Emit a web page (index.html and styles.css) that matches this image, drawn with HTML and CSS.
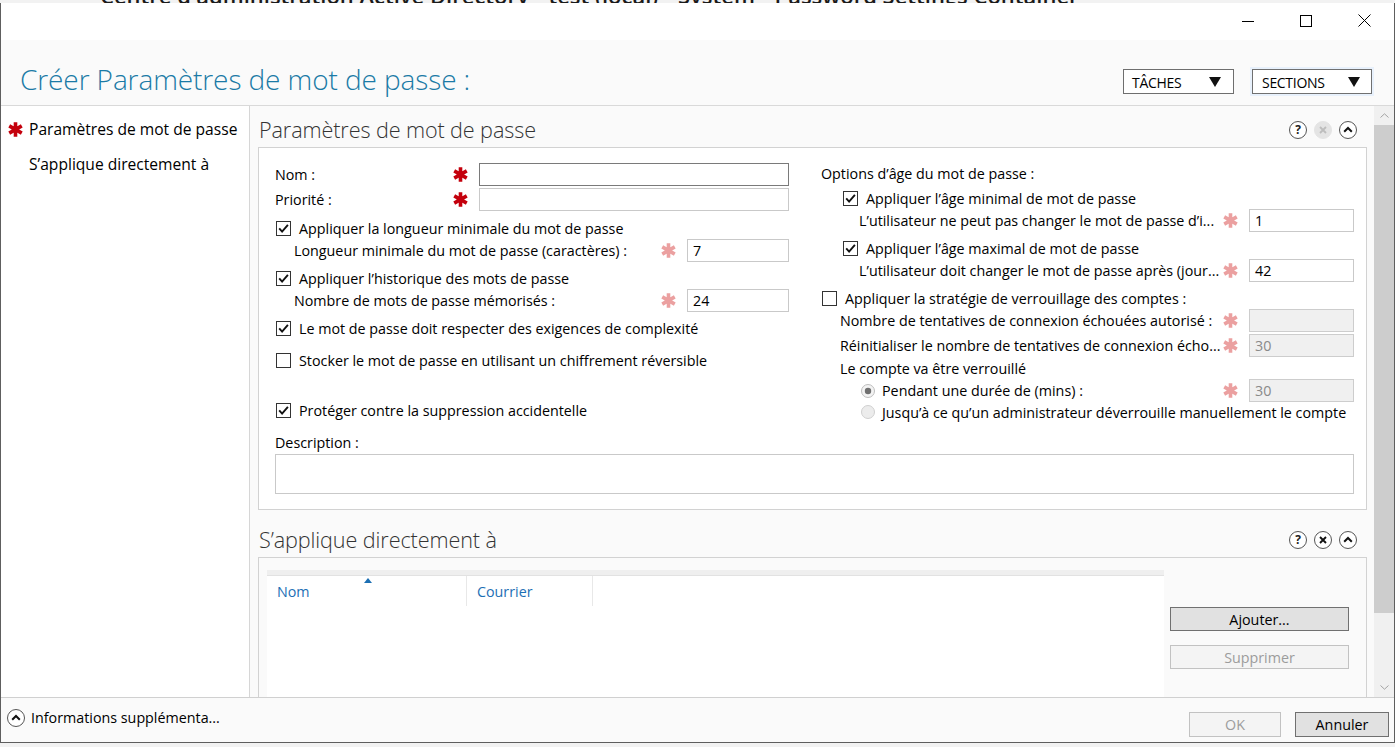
FILE: index.html
```html
<!DOCTYPE html>
<html lang="fr">
<head>
<meta charset="utf-8">
<title>Créer Paramètres de mot de passe</title>
<link rel="stylesheet" href="styles.css">
</head>
<body>
<div class="desk-top"><span>Centre d'administration Active Directory • test (local) • System • Password Settings Container</span></div>
<div class="window">
  <div class="titlebar">
    <div class="cap-btn"><svg width="12" height="12" viewBox="0 0 12 12"><path d="M0 6.5H12" stroke="#000" stroke-width="1"/></svg></div>
    <div class="cap-btn"><svg width="12" height="12" viewBox="0 0 12 12"><rect x="0.5" y="0.5" width="11" height="11" fill="none" stroke="#000"/></svg></div>
    <div class="cap-btn cap-close"><svg width="13" height="13" viewBox="0 0 13 13"><path d="M0.5 0.5L12.5 12.5M12.5 0.5L0.5 12.5" stroke="#000" stroke-width="1"/></svg></div>
  </div>
  <div class="header">
    <h1 class="title">Créer Paramètres de mot de passe :</h1>
    <div class="hdr-btns">
      <div class="drop"><span>TÂCHES</span><svg width="12" height="10" viewBox="0 0 12 10"><path d="M0 0H12L6 10Z" fill="#111"/></svg></div>
      <div class="drop drop-sections"><span>SECTIONS</span><svg width="12" height="10" viewBox="0 0 12 10"><path d="M0 0H12L6 10Z" fill="#111"/></svg></div>
    </div>
  </div>
  <div class="body">
    <nav class="nav">
      <div class="nav-item"><svg class="ast ast-red nav-ast" viewBox="0 0 16 16"><path d="M8 1.2V14.8M2.1 4.6L13.9 11.4M2.1 11.4L13.9 4.6" stroke="currentColor" stroke-width="3.4"/></svg><span>Paramètres de mot de passe</span></div>
      <div class="nav-item"><span>S’applique directement à</span></div>
    </nav>
    <div class="main">
      <div class="content">
        <div class="sec-head">
          <h2>Paramètres de mot de passe</h2>
          <div class="icons">
            <span class="ico ico-help">?</span>
            <span class="ico ico-off"><svg width="8" height="8" viewBox="0 0 8 8"><path d="M1 1L7 7M7 1L1 7" stroke="#bdbdbd" stroke-width="1.8"/></svg></span>
            <span class="ico"><svg width="10" height="7" viewBox="0 0 10 7"><path d="M1.2 5.8L5 2L8.8 5.8" fill="none" stroke="#111" stroke-width="2"/></svg></span>
          </div>
        </div>
        <div class="box box1">
          <div class="cols">
            <div class="col-left">
              <div class="row r-nom">
                <span class="lbl">Nom :</span>
                <svg class="ast ast-red" viewBox="0 0 16 16"><path d="M8 1.2V14.8M2.1 4.6L13.9 11.4M2.1 11.4L13.9 4.6" stroke="currentColor" stroke-width="3.4"/></svg>
                <span class="inp inp-wide inp-focus"></span>
              </div>
              <div class="row r-prio">
                <span class="lbl">Priorité :</span>
                <svg class="ast ast-red" viewBox="0 0 16 16"><path d="M8 1.2V14.8M2.1 4.6L13.9 11.4M2.1 11.4L13.9 4.6" stroke="currentColor" stroke-width="3.4"/></svg>
                <span class="inp inp-wide"></span>
              </div>
              <div class="row cbrow m6">
                <svg class="cb" viewBox="0 0 15 15"><rect x="0.5" y="0.5" width="14" height="14" fill="#fff" stroke="#333"/><path d="M3.2 7.4L6.1 10.6L11.9 3.8" fill="none" stroke="#111" stroke-width="1.9"/></svg>
                <span>Appliquer la longueur minimale du mot de passe</span>
              </div>
              <div class="row sub ind19">
                <span class="lbl">Longueur minimale du mot de passe (caractères) :</span>
                <svg class="ast ast-pink" viewBox="0 0 16 16"><path d="M8 1.2V14.8M2.1 4.6L13.9 11.4M2.1 11.4L13.9 4.6" stroke="currentColor" stroke-width="3.4"/></svg>
                <span class="inp inp-sm">7</span>
              </div>
              <div class="row cbrow m5">
                <svg class="cb" viewBox="0 0 15 15"><rect x="0.5" y="0.5" width="14" height="14" fill="#fff" stroke="#333"/><path d="M3.2 7.4L6.1 10.6L11.9 3.8" fill="none" stroke="#111" stroke-width="1.9"/></svg>
                <span>Appliquer l’historique des mots de passe</span>
              </div>
              <div class="row sub ind19">
                <span class="lbl">Nombre de mots de passe mémorisés :</span>
                <svg class="ast ast-pink" viewBox="0 0 16 16"><path d="M8 1.2V14.8M2.1 4.6L13.9 11.4M2.1 11.4L13.9 4.6" stroke="currentColor" stroke-width="3.4"/></svg>
                <span class="inp inp-sm">24</span>
              </div>
              <div class="row cbrow m5">
                <svg class="cb" viewBox="0 0 15 15"><rect x="0.5" y="0.5" width="14" height="14" fill="#fff" stroke="#333"/><path d="M3.2 7.4L6.1 10.6L11.9 3.8" fill="none" stroke="#111" stroke-width="1.9"/></svg>
                <span>Le mot de passe doit respecter des exigences de complexité</span>
              </div>
              <div class="row cbrow m10">
                <svg class="cb" viewBox="0 0 15 15"><rect x="0.5" y="0.5" width="14" height="14" fill="#fff" stroke="#333"/></svg>
                <span>Stocker le mot de passe en utilisant un chiffrement réversible</span>
              </div>
              <div class="row cbrow m28">
                <svg class="cb" viewBox="0 0 15 15"><rect x="0.5" y="0.5" width="14" height="14" fill="#fff" stroke="#333"/><path d="M3.2 7.4L6.1 10.6L11.9 3.8" fill="none" stroke="#111" stroke-width="1.9"/></svg>
                <span>Protéger contre la suppression accidentelle</span>
              </div>
            </div>
            <div class="col-right">
              <div class="row r-label">Options d’âge du mot de passe :</div>
              <div class="row cbrow m4 ind22">
                <svg class="cb" viewBox="0 0 15 15"><rect x="0.5" y="0.5" width="14" height="14" fill="#fff" stroke="#333"/><path d="M3.2 7.4L6.1 10.6L11.9 3.8" fill="none" stroke="#111" stroke-width="1.9"/></svg>
                <span>Appliquer l’âge minimal de mot de passe</span>
              </div>
              <div class="row sub ind38">
                <span class="lbl">L’utilisateur ne peut pas changer le mot de passe d’i...</span>
                <svg class="ast ast-pink" viewBox="0 0 16 16"><path d="M8 1.2V14.8M2.1 4.6L13.9 11.4M2.1 11.4L13.9 4.6" stroke="currentColor" stroke-width="3.4"/></svg>
                <span class="inp inp-r">1</span>
              </div>
              <div class="row cbrow m5 ind22">
                <svg class="cb" viewBox="0 0 15 15"><rect x="0.5" y="0.5" width="14" height="14" fill="#fff" stroke="#333"/><path d="M3.2 7.4L6.1 10.6L11.9 3.8" fill="none" stroke="#111" stroke-width="1.9"/></svg>
                <span>Appliquer l’âge maximal de mot de passe</span>
              </div>
              <div class="row sub ind38">
                <span class="lbl">L’utilisateur doit changer le mot de passe après (jour...</span>
                <svg class="ast ast-pink" viewBox="0 0 16 16"><path d="M8 1.2V14.8M2.1 4.6L13.9 11.4M2.1 11.4L13.9 4.6" stroke="currentColor" stroke-width="3.4"/></svg>
                <span class="inp inp-r">42</span>
              </div>
              <div class="row cbrow m5">
                <svg class="cb" viewBox="0 0 15 15"><rect x="0.5" y="0.5" width="14" height="14" fill="#fff" stroke="#333"/></svg>
                <span>Appliquer la stratégie de verrouillage des comptes :</span>
              </div>
              <div class="row sub ind19">
                <span class="lbl">Nombre de tentatives de connexion échouées autorisé :</span>
                <svg class="ast ast-pink" viewBox="0 0 16 16"><path d="M8 1.2V14.8M2.1 4.6L13.9 11.4M2.1 11.4L13.9 4.6" stroke="currentColor" stroke-width="3.4"/></svg>
                <span class="inp inp-r inp-dis"></span>
              </div>
              <div class="row sub ind19 m2">
                <span class="lbl">Réinitialiser le nombre de tentatives de connexion écho...</span>
                <svg class="ast ast-pink" viewBox="0 0 16 16"><path d="M8 1.2V14.8M2.1 4.6L13.9 11.4M2.1 11.4L13.9 4.6" stroke="currentColor" stroke-width="3.4"/></svg>
                <span class="inp inp-r inp-dis">30</span>
              </div>
              <div class="row r-label ind19 m1">Le compte va être verrouillé</div>
              <div class="row sub ind40 m1">
                <svg class="rd" viewBox="0 0 14 14"><circle cx="7" cy="7" r="6.5" fill="#f3f3f3" stroke="#bdbdbd"/><circle cx="7" cy="7" r="3.2" fill="#6f6f6f"/></svg>
                <span class="lbl">Pendant une durée de (mins) :</span>
                <svg class="ast ast-pink" viewBox="0 0 16 16"><path d="M8 1.2V14.8M2.1 4.6L13.9 11.4M2.1 11.4L13.9 4.6" stroke="currentColor" stroke-width="3.4"/></svg>
                <span class="inp inp-r inp-dis">30</span>
              </div>
              <div class="row r-radio ind40">
                <svg class="rd" viewBox="0 0 14 14"><circle cx="7" cy="7" r="6.5" fill="#ececec" stroke="#cfcfcf"/></svg>
                <span>Jusqu’à ce qu’un administrateur déverrouille manuellement le compte</span>
              </div>
            </div>
          </div>
          <div class="desc-lbl">Description :</div>
          <div class="desc"></div>
        </div>

        <div class="sec-head sec-head2">
          <h2>S’applique directement à</h2>
          <div class="icons">
            <span class="ico ico-help">?</span>
            <span class="ico"><svg width="8" height="8" viewBox="0 0 8 8"><path d="M1 1L7 7M7 1L1 7" stroke="#111" stroke-width="1.9"/></svg></span>
            <span class="ico"><svg width="10" height="7" viewBox="0 0 10 7"><path d="M1.2 5.8L5 2L8.8 5.8" fill="none" stroke="#111" stroke-width="2"/></svg></span>
          </div>
        </div>
        <div class="box box2">
          <div class="list">
            <div class="list-top"></div>
            <div class="list-head">
              <div class="lcol lc1">Nom<svg class="sort" width="8" height="5" viewBox="0 0 8 5"><path d="M0 5L4 0L8 5Z" fill="#1c6fb3"/></svg></div>
              <div class="lcol lc2">Courrier</div>
              <div class="lcol lc3"></div>
            </div>
          </div>
          <div class="list-btns">
            <div class="btn">Ajouter...</div>
            <div class="btn btn-dis">Supprimer</div>
          </div>
        </div>
      </div>
      <div class="scrollbar">
        <div class="sb-arrow"><svg width="9" height="5" viewBox="0 0 9 5"><path d="M0.5 4.5L4.5 0.8L8.5 4.5" fill="none" stroke="#a3a3a3"/></svg></div>
        <div class="sb-thumb"></div>
        <div class="sb-track"></div>
        <div class="sb-arrow"><svg width="9" height="5" viewBox="0 0 9 5"><path d="M0.5 0.5L4.5 4.2L8.5 0.5" fill="none" stroke="#a3a3a3"/></svg></div>
      </div>
    </div>
  </div>
  <div class="footer">
    <div class="more">
      <span class="ico"><svg width="10" height="7" viewBox="0 0 10 7"><path d="M1.2 5.8L5 2L8.8 5.8" fill="none" stroke="#111" stroke-width="2"/></svg></span>
      <span>Informations supplémenta...</span>
    </div>
    <div class="foot-btns">
      <div class="btn btn-dis btn-ok">OK</div>
      <div class="btn btn-cancel">Annuler</div>
    </div>
  </div>
</div>
<div class="desk-bottom"><span>E WINDOWS POWERSHELL</span></div>
</body>
</html>
```

FILE: styles.css
```css
* { box-sizing: border-box; }
html, body { margin: 0; padding: 0; }
body {
  width: 1395px;
  height: 747px;
  overflow: hidden;
  background: #f2f2f2;
  font-family: "Open Sans", "Segoe UI", sans-serif;
  font-size: 14.3px;
  color: #000;
}
.desk-top { height: 3px; overflow: hidden; background: #f2f2f2; }
.desk-top span {
  display: block;
  margin-top: -15px;
  margin-left: 100px;
  font-size: 22px;
  line-height: 20px;
  font-weight: 600;
  color: #1a1a1a;
  white-space: nowrap;
}
.desk-bottom { height: 4px; overflow: hidden; }
.desk-bottom span {
  display: block;
  margin-left: -4px;
  margin-top: 1px;
  font-size: 22px;
  line-height: 22px;
  font-weight: 700;
  color: #333;
  white-space: nowrap;
}
.window {
  height: 740px;
  border: 1px solid #5e5e5e;
  border-top: none;
  background: #fff;
  display: flex;
  flex-direction: column;
}
.titlebar {
  height: 37px;
  flex: none;
  display: flex;
  justify-content: flex-end;
  background: #fff;
}
.cap-btn {
  width: 58px;
  height: 35px;
  display: flex;
  align-items: center;
  justify-content: center;
}
.cap-close { width: 59px; }
.header {
  height: 66px;
  flex: none;
  background: #fafafa;
  border-bottom: 1px solid #d9d9d9;
  display: flex;
  justify-content: space-between;
  align-items: flex-start;
}
.title {
  margin: 20px 0 0 19px;
  font-weight: 300;
  font-size: 28px;
  line-height: 38px;
  color: #1b7aa6;
  letter-spacing: -0.1px;
}
.hdr-btns { display: flex; margin-top: 27px; margin-right: 20px; gap: 16px; }
.drop {
  height: 25px;
  border: 1px solid #6e6e6e;
  background: #fff;
  display: flex;
  align-items: center;
  justify-content: space-between;
  padding: 0 12px 0 8px;
  font-size: 14px;
  letter-spacing: -0.3px;
  margin-top: 2px;
}
.drop span { padding-top: 1px; }
.drop:first-child { width: 111px; }
.drop-sections {
  width: 124px;
  height: 29px;
  margin-top: 0;
  border: 3px solid #e8f1fc;
  outline: 1px solid #707070;
  outline-offset: -3px;
  padding: 0 11px 0 9px;
}
.body { height: 591px; flex: none; display: flex; }
.nav {
  width: 249px;
  flex: none;
  background: #fff;
  border-right: 1px solid #d6d6d6;
  padding-top: 5px;
}
.nav-item {
  height: 35px;
  display: flex;
  align-items: center;
  padding-left: 28px;
  font-size: 15.6px;
  position: relative;
}
.nav-ast { position: absolute; left: 6px; top: 10px; width: 16px; height: 16px; }
.main { flex: 1; display: flex; min-width: 0; }
.content {
  flex: 1;
  min-width: 0;
  overflow: hidden;
  background: #fafafa;
  padding: 5px 7px 0 8px;
}
.sec-head {
  height: 36px;
  display: flex;
  align-items: center;
  justify-content: space-between;
  padding: 0 10px 0 1px;
}
.sec-head2 { margin-top: 11px; }
.sec-head h2 {
  margin: 0;
  font-weight: 300;
  font-size: 21.6px;
  color: #333;
  letter-spacing: -0.1px;
}
.icons { display: flex; gap: 7px; padding-top: 1px; }
.ico {
  width: 18px;
  height: 18px;
  border: 1px solid #555;
  border-radius: 50%;
  background: #fff;
  display: flex;
  align-items: center;
  justify-content: center;
  flex: none;
}
.ico-help { font-size: 12px; font-weight: 700; color: #222; line-height: 1; }
.ico-off { background: #e4e4e4; border-color: #e4e4e4; }
.box {
  border: 1px solid #d2d2d2;
  background: #fff;
}
.box1 { padding: 15px 12px 15px 16px; }
.cols { display: flex; gap: 32px; }
.col-left { width: 514px; flex: none; }
.col-right { flex: 1; min-width: 0; }
.row { display: flex; align-items: center; white-space: nowrap; }
.r-nom, .r-prio { height: 23px; }
.r-prio { margin-top: 2px; }
.cbrow { height: 22px; padding-left: 1px; }
.cb { width: 15px; height: 15px; flex: none; margin-right: 8px; }
.rd { width: 14px; height: 14px; flex: none; margin-right: 7px; }
.sub { height: 23px; }
.r-label { height: 20px; }
.r-radio { height: 20px; }
.m1 { margin-top: 1px; }
.m2 { margin-top: 2px; }
.m4 { margin-top: 4px; }
.m5 { margin-top: 5px; }
.m6 { margin-top: 6px; }
.m10 { margin-top: 10px; }
.m28 { margin-top: 28px; }
.ind19 { padding-left: 19px; }
.ind22 { padding-left: 22px; }
.ind38 { padding-left: 38px; }
.ind40 { padding-left: 40px; }
.lbl { flex: 1; min-width: 0; overflow: hidden; }
.ast { width: 17px; height: 17px; flex: none; margin-right: 10px; }
.ast-red { color: #c4000c; }
.ast-pink { color: #eba0a0; }
.inp {
  height: 23px;
  border: 1px solid #c9c9c9;
  background: #fff;
  display: flex;
  align-items: center;
  padding-left: 5px;
  flex: none;
}
.inp-wide { width: 310px; }
.inp-focus { border-color: #7a7a7a; }
.inp-sm { width: 102px; }
.inp-r { width: 105px; }
.inp-dis { background: #f0f0f0; border-color: #cdcdcd; color: #8a8a8a; }
.desc-lbl { margin-top: 12px; height: 18px; line-height: 18px; }
.desc { margin-top: 2px; height: 40px; border: 1px solid #c9c9c9; background: #fff; }
.box2 {
  height: 200px;
  display: flex;
  padding: 12px 17px 0 8px;
  background: #fafafa;
}
.list { width: 897px; flex: none; background: #fff; height: 160px; }
.list-top { height: 6px; background: #efefef; border-bottom: 1px solid #e2e2e2; }
.list-head { display: flex; height: 30px; }
.lcol {
  color: #1d6fb5;
  font-size: 14.3px;
  padding-left: 10px;
  display: flex;
  align-items: center;
  border-right: 1px solid #e8e8e8;
  position: relative;
}
.lc1 { width: 200px; }
.lc2 { width: 126px; }
.lc3 { flex: 1; border-right: none; }
.sort { position: absolute; left: 97px; top: 2px; }
.list-btns { margin-left: 6px; flex: 1; padding-top: 37px; display: flex; flex-direction: column; gap: 14px; }
.btn {
  height: 24px;
  border: 1px solid #707070;
  background: #e1e1e1;
  display: flex;
  align-items: center;
  justify-content: center;
  font-size: 14.3px;
}
.btn-dis { background: #f4f4f4; border-color: #c2c2c2; color: #9c9c9c; }
.scrollbar { width: 20px; flex: none; background: #f0f0f0; display: flex; flex-direction: column; }
.sb-arrow { height: 19px; display: flex; align-items: center; justify-content: center; flex: none; }
.sb-thumb { height: 488px; background: #cdcdcd; flex: none; }
.sb-track { flex: 1; }
.footer {
  flex: 1;
  background: #fafafa;
  border-top: 1px solid #d0d0d0;
  display: flex;
  justify-content: space-between;
  align-items: flex-start;
}
.more { display: flex; align-items: center; gap: 6px; margin: 10px 0 0 6px; font-size: 14.3px; }
.foot-btns { display: flex; gap: 14px; margin: 14px 5px 0 0; }
.btn-ok { width: 92px; height: 25px; }
.btn-cancel { width: 94px; height: 25px; }
```
